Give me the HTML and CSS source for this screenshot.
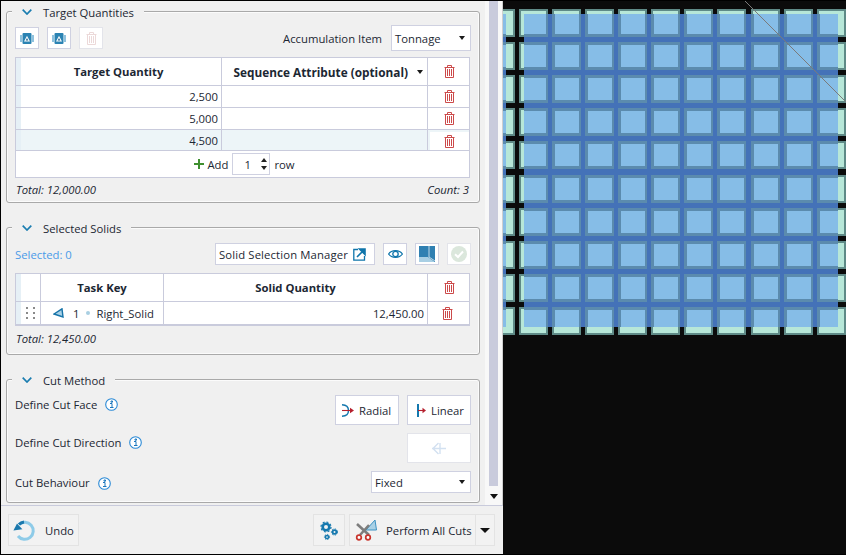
FILE: index.html
```html
<!DOCTYPE html>
<html lang="en">
<head>
<meta charset="utf-8">
<title>Cut Planner</title>
<link rel="stylesheet" href="styles.css">
</head>
<body>
<svg class="defs" width="0" height="0" aria-hidden="true">
  <defs>
    <symbol id="chev" viewBox="0 0 10 6">
      <path d="M.7.7 5 5l4.300-4.300" fill="none" stroke="#1a7db0" stroke-width="1.700"/>
    </symbol>
    <symbol id="info" viewBox="0 0 13 13">
      <circle cx="6.500" cy="6.500" r="5.800" fill="#fff" stroke="#2b8ad6" stroke-width="1.100"/>
      <path d="M5 5.500h2v4h1M5 9.500h3.500M6 3h1.500v1.200H6z" fill="none" stroke="#1b76bd"/>
    </symbol>
    <symbol id="solid" viewBox="0 0 14 11">
      <path d="M0 2h2v7H0zM12 2h2v7h-2z" fill="#8fc2de"/>
      <rect x="2.500" width="9" height="11" rx="1" fill="#2b83b3"/>
      <path d="M7 2.800 10 8.500H4z" fill="#fff"/>
      <path d="M7 5 8.300 7.500H5.700z" fill="#1a5f8c"/>
    </symbol>
    <g id="cellA">
      <rect width="29" height="28" fill="#5f8a87"/>
      <rect x="2" y="2" width="25" height="24" fill="#b7e7d8"/>
    </g>
    <g id="cellB">
      <rect width="29" height="28" fill="#5b8bae"/>
      <rect x="3" y="3" width="24" height="22" fill="#86bde7"/>
    </g>
    <g id="rowA">
      <use href="#cellA" x="486"/><use href="#cellA" x="519"/><use href="#cellA" x="552"/><use href="#cellA" x="585"/><use href="#cellA" x="618"/><use href="#cellA" x="651"/><use href="#cellA" x="684"/><use href="#cellA" x="717"/><use href="#cellA" x="751"/><use href="#cellA" x="784"/><use href="#cellA" x="817"/>
    </g>
    <g id="rowB">
      <use href="#cellB" x="486"/><use href="#cellB" x="519"/><use href="#cellB" x="552"/><use href="#cellB" x="585"/><use href="#cellB" x="618"/><use href="#cellB" x="651"/><use href="#cellB" x="684"/><use href="#cellB" x="717"/><use href="#cellB" x="751"/><use href="#cellB" x="784"/><use href="#cellB" x="817"/>
    </g>
    <clipPath id="blueZone">
      <rect x="524" y="14" width="314" height="313"/>
      <rect x="503" y="14" width="3" height="313"/>
    </clipPath>
  </defs>
</svg>

<div class="app">
  <div class="panel">
    <div class="panel-body">
      <div class="sections">
        <fieldset class="group">
          <legend class="group-title"><svg class="chev"><use href="#chev"/></svg><span>Target Quantities</span></legend>
          <div class="toolbar">
            <button class="icon-btn"><svg class="ic-solid"><use href="#solid"/></svg></button>
            <button class="icon-btn"><svg class="ic-solid"><use href="#solid"/></svg></button>
            <button class="icon-btn is-off"><svg class="ic-trash" viewBox="0 0 11 13"><path class="trash-off" d="M.5 2.500h10M1.500 2.500v10h8v-10M3.500 2.500v-2h4v2M3.500 4v7M5.500 4v7M7.500 4v7"/></svg></button>
            <span class="spacer"></span>
            <span class="label">Accumulation Item</span>
            <div class="select select-tall"><span>Tonnage</span><i class="caret"></i></div>
          </div>
          <div class="table table-target">
            <div class="row row-head">
              <div class="cell sel"></div>
              <div class="cell head head-qty">Target Quantity</div>
              <div class="cell head head-attr"><span>Sequence Attribute (optional)</span><i class="caret"></i></div>
              <div class="cell del"><svg class="ic-trash" viewBox="0 0 11 13"><path class="trash-on" d="M.5 2.500h10M1.500 2.500v10h8v-10M3.500 2.500v-2h4v2M3.500 4v7M5.500 4v7M7.500 4v7"/></svg></div>
            </div>
            <div class="row">
              <div class="cell sel"></div><div class="cell num">2,500</div><div class="cell"></div>
              <div class="cell del"><svg class="ic-trash" viewBox="0 0 11 13"><path class="trash-on" d="M.5 2.500h10M1.500 2.500v10h8v-10M3.500 2.500v-2h4v2M3.500 4v7M5.500 4v7M7.500 4v7"/></svg></div>
            </div>
            <div class="row">
              <div class="cell sel"></div><div class="cell num">5,000</div><div class="cell"></div>
              <div class="cell del"><svg class="ic-trash" viewBox="0 0 11 13"><path class="trash-on" d="M.5 2.500h10M1.500 2.500v10h8v-10M3.500 2.500v-2h4v2M3.500 4v7M5.500 4v7M7.500 4v7"/></svg></div>
            </div>
            <div class="row row-active">
              <div class="cell sel"></div><div class="cell num">4,500</div><div class="cell"></div>
              <div class="cell del"><svg class="ic-trash" viewBox="0 0 11 13"><path class="trash-on" d="M.5 2.500h10M1.500 2.500v10h8v-10M3.500 2.500v-2h4v2M3.500 4v7M5.500 4v7M7.500 4v7"/></svg></div>
            </div>
            <div class="add-row">
              <svg class="ic-plus" viewBox="0 0 10 10"><path d="M5 0v10M0 5h10" stroke="#3f8f2f" stroke-width="2"/></svg>
              <span class="add-label">Add</span>
              <div class="spin"><span class="spin-val">1</span><span class="spin-arrows"><i class="up"></i><i class="down"></i></span></div>
              <span class="row-label">row</span>
            </div>
          </div>
          <div class="summary summary-first"><span>Total: 12,000.00</span><span>Count: 3</span></div>
        </fieldset>

        <fieldset class="group group-solids">
          <legend class="group-title"><svg class="chev"><use href="#chev"/></svg><span>Selected Solids</span></legend>
          <div class="toolbar toolbar-solids">
            <span class="selected">Selected: 0</span>
            <span class="spacer"></span>
            <button class="text-btn manager"><span>Solid Selection Manager</span>
              <svg class="ic-open" viewBox="0 0 13 13"><path d="M5 1.500H.8v10.700h10.700V8" fill="none" stroke="#0f75ab" stroke-width="1.300"/><path d="M4 9l7-7M6.500 1h5.500v5.500z" stroke="#0f75ab" stroke-width="1.600" fill="#0f75ab"/></svg>
            </button>
            <button class="icon-btn"><svg class="ic-eye" viewBox="0 0 15 10"><path d="M.6 5C3.500.5 11.500.5 14.400 5 11.500 9.500 3.500 9.500.6 5z" fill="none" stroke="#0f75ab" stroke-width="1.200"/><circle cx="7.500" cy="5" r="2.700" fill="none" stroke="#0f75ab" stroke-width="1.300"/></svg></button>
            <button class="icon-btn"><svg class="ic-cube" viewBox="0 0 16 16"><path d="M0 0h16v16H0z" fill="#2f80b2"/><path d="M0 11h9l7 5H0z" fill="#a8cfe4"/><path d="M10 0v11l6 5V0z" fill="#2f80b2"/><path d="M10 0v11L16 15" fill="none" stroke="#fff" stroke-width=".7"/></svg></button>
            <button class="icon-btn is-off"><svg class="ic-check" viewBox="0 0 16 16"><circle cx="8" cy="8" r="8" fill="#dbe7dc"/><path d="M4 8.300 7 11l5-5.500" fill="none" stroke="#fff" stroke-width="2"/></svg></button>
          </div>
          <div class="table table-solids">
            <div class="row row-head">
              <div class="cell sel"></div>
              <div class="cell"></div>
              <div class="cell head">Task Key</div>
              <div class="cell head">Solid Quantity</div>
              <div class="cell del"><svg class="ic-trash" viewBox="0 0 11 13"><path class="trash-on" d="M.5 2.500h10M1.500 2.500v10h8v-10M3.500 2.500v-2h4v2M3.500 4v7M5.500 4v7M7.500 4v7"/></svg></div>
            </div>
            <div class="row">
              <div class="cell sel"></div>
              <div class="cell handle"><svg class="ic-handle" viewBox="0 0 9 12"><path d="M0 0h2v2H0zM7 0h2v2H7zM0 5h2v2H0zM7 5h2v2H7zM0 10h2v2H0zM7 10h2v2H7z" fill="#8a8a8a"/></svg></div>
              <div class="cell task">
                <svg class="ic-wedge" viewBox="0 0 11 10"><path d="M1 6 9 .8l1 8.200z" fill="#a9d1e6" stroke="#1673a8" stroke-width="1.400"/></svg>
                <span class="task-no">1</span><i class="dot"></i><span>Right_Solid</span>
              </div>
              <div class="cell num">12,450.00</div>
              <div class="cell del del-shift"><svg class="ic-trash" viewBox="0 0 11 13"><path class="trash-on" d="M.5 2.500h10M1.500 2.500v10h8v-10M3.500 2.500v-2h4v2M3.500 4v7M5.500 4v7M7.500 4v7"/></svg></div>
            </div>
          </div>
          <div class="summary"><span>Total: 12,450.00</span></div>
        </fieldset>

        <fieldset class="group">
          <legend class="group-title"><svg class="chev"><use href="#chev"/></svg><span>Cut Method</span></legend>
          <div class="method">
            <div class="method-label">Define Cut Face<svg class="ic-info"><use href="#info"/></svg></div>
            <div class="method-ctl">
              <button class="text-btn wide">
                <svg class="ic-cut" viewBox="0 0 14 13"><path d="M1 .8C6 1 7.500 4 7.500 6.500S6 12 1 12.200" fill="none" stroke="#1478ae" stroke-width="1.400"/><path d="M1 6.500h8" stroke="#b5202e" stroke-width="1.100"/><path d="M9 3.800 13 6.500 9 9.200z" fill="#b5202e"/></svg>
                <span>Radial</span></button>
              <button class="text-btn wide">
                <svg class="ic-cut" viewBox="0 0 14 13"><path d="M5 0v13" stroke="#1478ae" stroke-width="2"/><path d="M5 6.500h5" stroke="#b5202e" stroke-width="1.100"/><path d="M9.500 3.800 13 6.500 9.500 9.200z" fill="#b5202e"/></svg>
                <span>Linear</span></button>
            </div>
            <div class="method-label">Define Cut Direction<svg class="ic-info"><use href="#info"/></svg></div>
            <div class="method-ctl">
              <button class="text-btn wide wide-c is-off"><svg class="ic-dir" viewBox="0 0 14 13"><path d="M0 6.500h14M6.500 1 1 6.500 6.500 12M8 1v11" fill="none" stroke="#d3e1f1" stroke-width="1.400"/></svg></button>
            </div>
            <div class="method-label method-label-c">Cut Behaviour<svg class="ic-info"><use href="#info"/></svg></div>
            <div class="method-ctl">
              <div class="select select-fixed"><span>Fixed</span><i class="caret"></i></div>
            </div>
          </div>
        </fieldset>
      </div>
      <div class="scrollbar">
        <div class="thumb"></div>
        <i class="scroll-down"></i>
      </div>
    </div>
    <div class="footer">
      <button class="foot-btn undo">
        <svg class="ic-undo" viewBox="0 0 23 23"><path d="M6 5.500A8.500 8.500 0 1 1 5 17" fill="none" stroke="#8ecbe8" stroke-width="3"/><path d="M11 3A8.500 8.500 0 0 0 6 5.500" fill="none" stroke="#1a78ad" stroke-width="3"/><path d="M0 11h9L4.500 4.500z" fill="#1a78ad" transform="rotate(-8 4 8)"/></svg>
        <span>Undo</span></button>
      <span class="spacer"></span>
      <button class="foot-btn gear" aria-label="Settings">
        <svg class="ic-gears" viewBox="0 0 18 19"><g fill="none" stroke="#1478ae"><circle cx="6" cy="6" r="3.300" stroke-width="2.600"/><circle cx="6" cy="6" r="5" stroke-width="1.200" stroke-dasharray="2 1.900"/><circle cx="14.500" cy="11" r="1.900" stroke-width="1.800"/><circle cx="14.500" cy="11" r="3.100" stroke-width="1" stroke-dasharray="1.500 1.400"/><circle cx="7" cy="16" r="1.600" stroke-width="1.500"/><circle cx="7" cy="16" r="2.600" stroke-width=".9" stroke-dasharray="1.300 1.100"/></g></svg>
      </button>
      <div class="split">
        <button class="foot-btn perform">
          <svg class="ic-sciss" viewBox="0 0 22 22"><path d="M11 11 20 1l1.500 10z" fill="#a9d1e6" stroke="#3d92c2"/><path d="M2 5 14 16" stroke="#7d7d7d" stroke-width="2.600"/><path d="M14 6 5 16" stroke="#7d7d7d" stroke-width="2.600"/><circle cx="4" cy="18.500" r="2.300" fill="#fff" stroke="#c9352d" stroke-width="1.700"/><circle cx="13" cy="18.500" r="2.300" fill="#fff" stroke="#c9352d" stroke-width="1.700"/></svg>
          <span>Perform All Cuts</span>
        </button>
        <button class="foot-btn drop" aria-label="More"><i class="drop-caret"></i></button>
      </div>
    </div>
  </div>

  <svg class="mesh" viewBox="503 1 343 553" width="343" height="553" shape-rendering="crispEdges" role="img" aria-label="Mesh view">
    <rect x="503" y="1" width="343" height="553" fill="#0b0b0b"/>
    <g>
      <use href="#rowA" y="9"/><use href="#rowA" y="42"/><use href="#rowA" y="75"/><use href="#rowA" y="108"/><use href="#rowA" y="141"/><use href="#rowA" y="175"/><use href="#rowA" y="208"/><use href="#rowA" y="241"/><use href="#rowA" y="274"/><use href="#rowA" y="307"/>
    </g>
    <g clip-path="url(#blueZone)">
      <rect x="503" y="14" width="343" height="313" fill="#4472b8"/>
      <use href="#rowB" y="9"/><use href="#rowB" y="42"/><use href="#rowB" y="75"/><use href="#rowB" y="108"/><use href="#rowB" y="141"/><use href="#rowB" y="175"/><use href="#rowB" y="208"/><use href="#rowB" y="241"/><use href="#rowB" y="274"/><use href="#rowB" y="307"/>
    </g>
    <path d="M744 0 846 102" stroke="#7a7a7a" stroke-width="1" shape-rendering="auto"/>
  </svg>
</div>
</body>
</html>
```

FILE: styles.css
```css
* { box-sizing: border-box; }
html, body { margin: 0; height: 100%; background: #000; overflow: hidden; }
body { font: 11.3px/16px "Open Sans", "Noto Sans", sans-serif; color: #1c2733; }
.defs { position: absolute; }
i { display: block; font-style: normal; }
button { font: inherit; color: inherit; margin: 0; padding: 0; cursor: default; }

.app { display: flex; width: 846px; height: 555px; padding: 1px 0 1px 1px; background: #000; }
.panel { width: 502px; display: flex; flex-direction: column; background: #f0f0f0; }
.panel-body { flex: 1; min-height: 0; display: flex; }
.sections { width: 484px; padding: 2px 0 0 5px; background: #f0f0f0; display: flex; flex-direction: column; gap: 16px; }
.scrollbar { width: 18px; background: #f8f8f8; border-right: 1px solid #cfcfcf; padding-left: 4px; position: relative; }
.thumb { width: 9px; height: 485px; background: #c9cbdc; }
.scroll-down { position: absolute; left: 5px; top: 493px; border: 4px solid transparent; border-top: 5px solid #111; border-bottom: 0; }

.group { margin: 0; width: 474px; min-width: 0; padding: 0 9px 0 8px; border: 1px solid #a9a9a9; border-radius: 3px; box-shadow: inset 0 0 0 1px #fbfbfb; }
.group-solids { padding-bottom: 3px; }
.group-title { margin-left: -3px; padding: 0 10px; display: flex; align-items: center; gap: 11px; height: 16px; background: #f0f0f0; white-space: nowrap; }
.group-title span { margin-top: 3px; }
.chev { width: 10px; height: 6px; margin-top: 2px; }

.toolbar { display: flex; align-items: center; gap: 8px; padding-top: 6px; height: 32px; margin-right: -1px; }
.toolbar-solids { padding-top: 8px; height: 30px; }
.spacer { flex: 1; }
.label, .selected, .select span, .text-btn span, .foot-btn span, .add-label, .row-label, .spin-val, .task span { padding-top: 1px; }
.label { margin-right: 1px; }
.selected { color: #4a9ae8; }

.icon-btn, .text-btn { height: 22px; background: #fff; border: 1px solid #cfd1e1; display: flex; align-items: center; justify-content: center; }
.icon-btn { width: 24px; }
.is-off { border-color: #e3e4ea; }
.ic-solid { width: 14px; height: 11px; }
.ic-trash { width: 11px; height: 13px; }
.trash-on, .trash-off { fill: none; stroke-width: 1; }
.trash-on { stroke: #cc4a4a; }
.trash-off { stroke: #ecd9d9; }
.ic-eye { width: 15px; height: 10px; }
.ic-cube { width: 16px; height: 16px; }
.ic-check { width: 16px; height: 16px; }
.ic-open { width: 13px; height: 13px; }
.manager { width: 160px; gap: 5px; justify-content: flex-start; padding-left: 3px; }
.manager span { letter-spacing: .13px; }

.select { background: #fff; border: 1px solid #cfd1e1; display: flex; align-items: center; justify-content: space-between; padding: 0 5px 0 3px; }
.select-tall { width: 80px; height: 26px; }
.select-fixed { width: 100px; height: 22px; }
.caret { border: 3.5px solid transparent; border-top: 4px solid #1a1a1a; border-bottom: 0; }

.table { margin-top: 6px; background: #fff; border: 1px solid #c9cbdc; }
.table-solids { margin-top: 8px; border-bottom-width: 2px; height: 53px; }
.row { display: grid; height: 22px; }
.table-target .row { grid-template-columns: 5px 201px 206px 1fr; }
.table-solids .row { grid-template-columns: 5px 20px 123px 264px 1fr; }
.row-head { height: 28px; }
.table-target .row-active { height: 21px; background: #edf5f8; }
.table-target .row, .table-solids .row-head { border-bottom: 1px solid #c9cbdc; }
.cell { border-right: 1px solid #c9cbdc; display: flex; align-items: center; min-width: 0; }
.cell.sel { background: #e6f0f6; border-right: 0; }
.cell.del { border-right: 0; justify-content: center; padding-left: 2px; }
.row-active .cell.del { background: #fff; margin: 2px 0 0 2px; padding: 1px 0 0; }
.cell.del-shift { padding: 0 2px 0 0; }
.head { font-weight: 700; justify-content: center; white-space: nowrap; }
.head-qty { padding-right: 5px; }
.head-attr { font-size: 11.800px; gap: 9px; justify-content: flex-end; padding-right: 4px; }
.num { justify-content: flex-end; padding: 1px 3px 0 0; }
.handle { justify-content: center; }
.ic-handle { width: 9px; height: 12px; }
.task { padding-left: 12px; white-space: nowrap; }
.ic-wedge { width: 11px; height: 10px; }
.task-no { margin-left: 9px; }
.dot { width: 4px; height: 4px; border-radius: 50%; background: #a9cfe2; margin: 0 6px 0 7px; }

.add-row { height: 26px; display: flex; align-items: center; justify-content: center; padding-left: 4px; }
.ic-plus { width: 10px; height: 10px; margin-right: 3px; }
.spin { width: 38px; height: 22px; margin: 0 4px; background: #fff; border: 1px solid #cfd1e1; display: flex; align-items: center; justify-content: space-between; padding: 0 2px 0 11px; }
.spin-arrows { display: flex; flex-direction: column; gap: 4px; }
.up { border: 3.5px solid transparent; border-bottom: 4px solid #222; border-top: 0; }
.down { border: 3.5px solid transparent; border-top: 4px solid #222; border-bottom: 0; }

.summary { height: 25px; display: flex; justify-content: space-between; align-items: center; font-style: italic; padding: 0 1px; }
.summary-first { height: 24px; }

.method { display: grid; grid-template-columns: 1fr auto; row-gap: 8px; padding-top: 8px; padding-bottom: 9px; margin-right: -1px; }
.method-label { display: flex; gap: 8px; align-items: flex-start; padding-top: 2px; }
.method-label-c { align-items: center; padding-top: 1px; }
.ic-info { width: 13px; height: 13px; margin-top: 1px; }
.method-ctl { display: flex; gap: 8px; justify-content: flex-end; }
.wide { height: 30px; gap: 4px; width: 64px; justify-content: flex-start; padding-left: 5px; }
.wide-c { justify-content: center; padding-left: 0; }
.ic-cut { width: 14px; height: 13px; }
.ic-dir { width: 14px; height: 13px; }

.footer { height: 49px; border-top: 1px solid #c9cbdc; background: #f0f0f0; display: flex; padding: 8px 8px 0 7px; gap: 4px; }
.foot-btn { height: 32px; background: #f2f2f2; border: 1px solid #e3e3e3; display: flex; align-items: center; }
.undo { width: 71px; padding-left: 4px; gap: 9px; }
.ic-undo { width: 23px; height: 23px; }
.gear { width: 32px; justify-content: center; }
.ic-gears { width: 18px; height: 19px; }
.split { display: flex; }
.perform { width: 127px; padding-left: 5px; gap: 9px; white-space: nowrap; }
.ic-sciss { width: 22px; height: 22px; }
.drop { width: 19px; border-left: 0; justify-content: center; }
.drop-caret { border: 5px solid transparent; border-top: 5px solid #111; border-bottom: 0; }

.mesh { display: block; flex: none; }
```
